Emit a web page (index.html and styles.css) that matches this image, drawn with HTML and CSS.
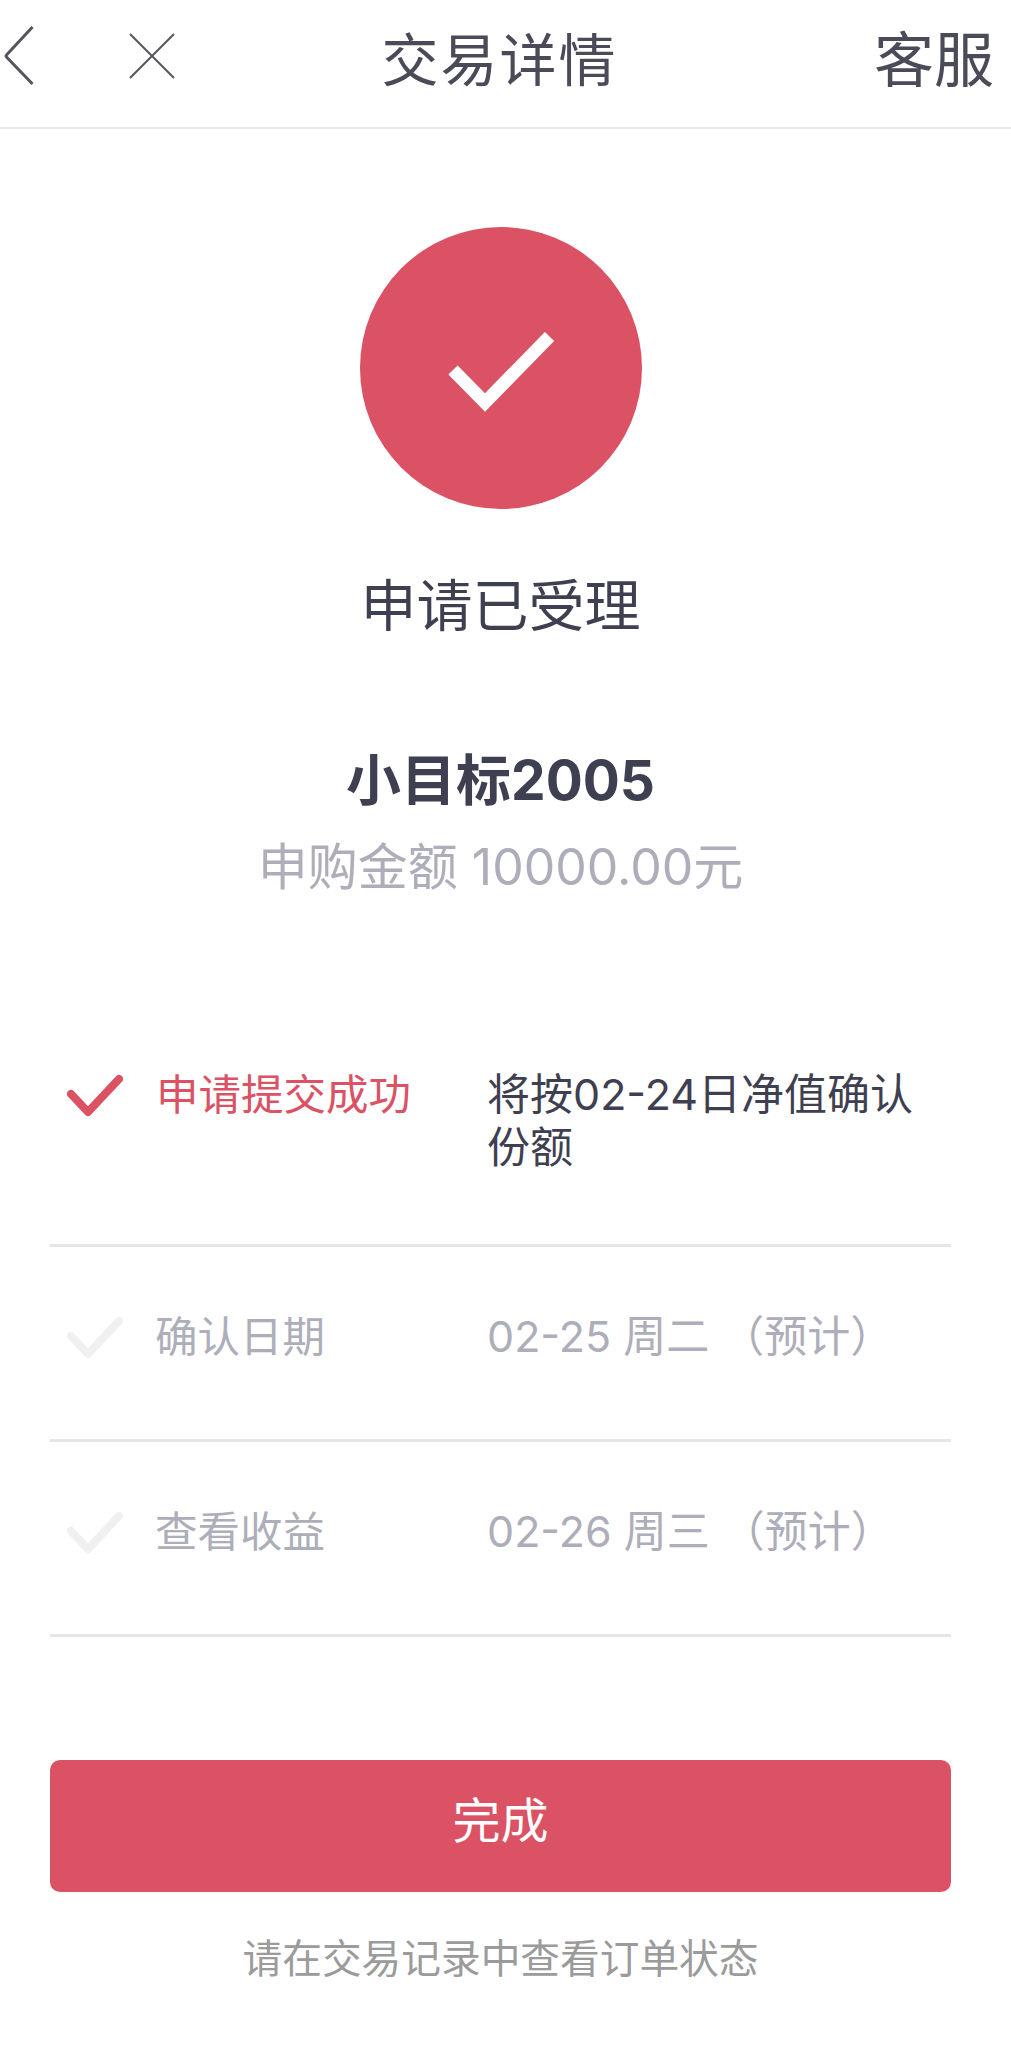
FILE: index.html
```html
<!DOCTYPE html>
<html lang="zh-CN">

<head>
    <meta charset="utf-8">
    <title>交易详情</title>
    <link rel="stylesheet" href="styles.css">
</head>

<body>
    <header class="topbar">
        <div class="topbar-left">
            <svg class="icon-back" width="32" height="60" viewBox="0 0 32 60">
                <path d="M29.5 1 L3.5 29 Q2.5 30 3.5 31 L29.5 58" />
            </svg>
            <svg class="icon-close" width="46" height="46" viewBox="0 0 46 46">
                <path d="M1 1 L45 45 M45 1 L1 45" />
            </svg>
        </div>
        <div class="topbar-title">交易详情</div>
        <div class="topbar-right">客服</div>
    </header>

    <section class="result">
        <div class="result-circle">
            <svg class="result-icon" width="108" height="82" viewBox="0 0 108 82">
                <path d="M6 38 L38 70.5 L102.5 4.5" />
            </svg>
        </div>
        <div class="result-status">申请已受理</div>
        <div class="result-name">小目标2005</div>
        <div class="result-amount">申购金额 10000.00元</div>
    </section>

    <section class="steps">
        <div class="step step-active">
            <svg class="step-check" width="56" height="43" viewBox="0 0 56 43">
                <path d="M4 20 L21 38 L52 5" />
            </svg>
            <div class="step-name">申请提交成功</div>
            <div class="step-info">将按02-24日净值确认份额</div>
        </div>
        <div class="step">
            <svg class="step-check" width="56" height="43" viewBox="0 0 56 43">
                <path d="M4 20 L21 38 L52 5" />
            </svg>
            <div class="step-name">确认日期</div>
            <div class="step-info">02-25 周二 （预计）</div>
        </div>
        <div class="step">
            <svg class="step-check" width="56" height="43" viewBox="0 0 56 43">
                <path d="M4 20 L21 38 L52 5" />
            </svg>
            <div class="step-name">查看收益</div>
            <div class="step-info">02-26 周三 （预计）</div>
        </div>
    </section>

    <div class="done-btn">完成</div>
    <p class="note">请在交易记录中查看订单状态</p>
</body>

</html>
```

FILE: styles.css
```css
body {
    font-family: Inter, "Noto Sans CJK SC", sans-serif;
    background-color: #fff;
    color: #3f3f52;
    margin: 0;
    padding: 0;
}

.topbar {
    display: grid;
    grid-template-columns: 1fr auto 1fr;
    align-items: center;
    box-sizing: border-box;
    height: 129px;
    border-bottom: 2px solid #e8e8e8;
    padding: 0 17px 16px 5px;
    color: #4a4a58;
}

.topbar-left {
    display: flex;
    align-items: center;
    gap: 94px;
    margin-left: -2px;
}

.topbar-left path {
    fill: none;
    stroke: #55555f;
}

.icon-back path {
    stroke-width: 3;
}

.icon-close path {
    stroke-width: 2;
}

.topbar-title {
    font-size: 57px;
    letter-spacing: 2px;
}

.topbar-right {
    font-size: 60px;
    text-align: right;
}

.result {
    display: flex;
    flex-direction: column;
    align-items: center;
    padding: 98px 10px 0 0;
}

.result-circle {
    display: flex;
    align-items: center;
    justify-content: center;
    width: 282px;
    height: 282px;
    border-radius: 50%;
    background-color: #da5263;
}

.result-icon {
    margin-top: 10px;
}

.result-icon path {
    fill: none;
    stroke: #fff;
    stroke-width: 13;
}

.result-status {
    margin-top: 62px;
    font-size: 56px;
    line-height: 70px;
}

.result-name {
    margin-top: 104px;
    font-size: 55px;
    line-height: 70px;
    font-weight: 700;
}

.result-amount {
    margin-top: 22px;
    font-size: 50px;
    line-height: 60px;
    color: #aeaeba;
}

.steps {
    margin: 102px 60px 0 50px;
}

.step {
    display: grid;
    grid-template-columns: 105px 332px 1fr;
    padding: 63px 0 76px;
    border-bottom: 3px solid #e6e6ea;
    font-size: 43px;
    line-height: 53px;
    color: #aeaeba;
}

.step-active {
    padding: 69px 0 70px;
}

.step-check {
    margin: 6px 0 0 17px;
}

.step-check path {
    fill: none;
    stroke: #f0f0f0;
    stroke-width: 8;
    stroke-linecap: round;
    stroke-linejoin: round;
}

.step-name {
    font-size: 42.5px;
}

.step-info {
    padding-right: 30px;
}

.step-active .step-check path {
    stroke: #da5263;
}

.step-active .step-name {
    color: #da5263;
    padding-left: 1px;
}

.step-active .step-info {
    color: #3f3f52;
}

.done-btn {
    margin: 123px 60px 0 50px;
    height: 132px;
    line-height: 122px;
    border-radius: 10px;
    background-color: #da5263;
    color: #fff;
    font-size: 48px;
    text-align: center;
}

.note {
    margin: 42px 10px 0 0;
    font-size: 39.7px;
    line-height: 50px;
    color: #9b9b9b;
    text-align: center;
}
```
